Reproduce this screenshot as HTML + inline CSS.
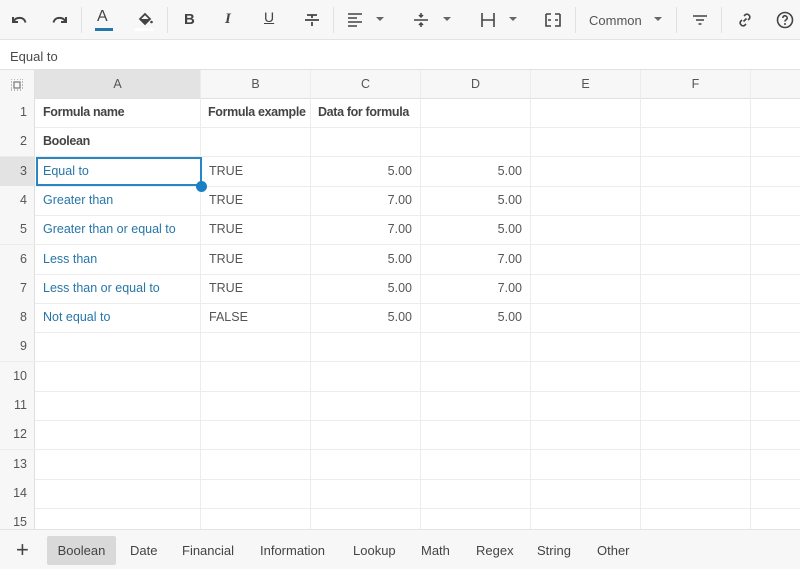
<!DOCTYPE html>
<html><head><meta charset="utf-8"><style>
*{box-sizing:border-box;margin:0;padding:0}
body{width:800px;height:569px;overflow:hidden;font-family:"Liberation Sans",Arial,sans-serif;background:#fff;position:relative;color:#555}
.tb{position:absolute;left:0;top:0;width:800px;height:40px;background:#f7f7f7;border-bottom:1px solid #e3e3e3}
.ic{position:absolute;top:10px}
.sep{position:absolute;top:7px;width:1px;height:26px;background:#e0e0e0}
.fb{position:absolute;top:40px;left:0;width:800px;height:30px;border-bottom:1px solid #e0e0e0;font-size:13px;padding:9px 10px;color:#4a4a4a}
.row{position:absolute;left:0;width:800px;height:30px;border-bottom:1px solid #ececec;font-size:12.5px}
.c{position:absolute;top:0;height:100%;border-right:1px solid #ececec;line-height:29px;padding:0 8px;white-space:nowrap;overflow:hidden}
.rh{left:0;width:35px;background:#f7f7f7;text-align:right;padding-right:7px;color:#555;border-right:1px solid #e0e0e0}
.a{left:35px;width:166px}.b{left:201px;width:110px}.cc{left:311px;width:110px}.d{left:421px;width:110px}.e{left:531px;width:110px}.f{left:641px;width:110px}.g{left:751px;width:60px}
.r{text-align:right}.bo{font-weight:bold;color:#444;letter-spacing:-0.35px}.bl{color:#2776a8}
.hd{background:#f7f7f7;text-align:center;color:#555;border-bottom:1px solid #e0e0e0}
.tabs{position:absolute;left:0;top:529px;width:800px;height:40px;background:#f7f7f7;border-top:1px solid #e3e3e3;font-size:13px}
.tab{position:absolute;top:6px;height:29px;line-height:29px;color:#444}
</style></head><body>
<div class="tb">
<svg class="ic" style="left:9px" width="20" height="20" viewBox="0 0 20 20"><path d="M4 7v5h5M4.5 11.5C6 8.5 9 7.5 12 8s4 2.5 4.5 4.5" fill="none" stroke="#444" stroke-width="2"/></svg>
<svg class="ic" style="left:50px" width="20" height="20" viewBox="0 0 20 20"><path d="M16 7v5h-5M15.5 11.5C14 8.5 11 7.5 8 8s-4 2.5-4.5 4.5" fill="none" stroke="#444" stroke-width="2"/></svg>
<div class="sep" style="left:81px"></div>
<div style="position:absolute;left:97px;top:8px;font-size:16px;color:#444">A</div>
<div style="position:absolute;left:95px;top:28px;width:18px;height:3px;background:#2776a8"></div>
<svg class="ic" style="left:135px" width="20" height="20" viewBox="0 0 20 20"><path d="M5 9l5-5 5 5-5 5z" fill="none" stroke="#444" stroke-width="1.8"/><path d="M5 9h10l-5 5z" fill="#444"/><circle cx="16.5" cy="12" r="1.3" fill="#444"/></svg>
<div style="position:absolute;left:135px;top:28px;width:18px;height:3px;background:#fff"></div>
<div class="sep" style="left:167px"></div>
<div style="position:absolute;left:184px;top:11px;font-size:15px;font-weight:bold;color:#444">B</div>
<div style="position:absolute;left:225px;top:11px;font-size:15px;font-style:italic;font-weight:bold;color:#444;font-family:'Liberation Serif',serif">I</div>
<div style="position:absolute;left:264px;top:9px;font-size:14px;color:#444;text-decoration:underline">U</div>
<svg class="ic" style="left:302px" width="20" height="20" viewBox="0 0 20 20"><path d="M5 5h10M10 5v3M3 10h14M10 12v4" stroke="#444" stroke-width="1.8"/></svg>
<div class="sep" style="left:333px"></div>
<svg class="ic" style="left:345px" width="20" height="20" viewBox="0 0 20 20"><path d="M3 4h14M3 8h9M3 12h14M3 16h9" stroke="#444" stroke-width="1.6"/></svg>
<div style="position:absolute;left:376px;top:17px;border:4px solid transparent;border-top:4px solid #666"></div>
<svg class="ic" style="left:411px" width="20" height="20" viewBox="0 0 20 20"><path d="M3 10h14M10 3v4M8 5l2 2 2-2M10 17v-4M8 15l2-2 2 2" stroke="#444" stroke-width="1.5" fill="none"/></svg>
<div style="position:absolute;left:443px;top:17px;border:4px solid transparent;border-top:4px solid #666"></div>
<svg class="ic" style="left:478px" width="20" height="20" viewBox="0 0 20 20"><path d="M4 3v14M16 3v14M4 10h12" stroke="#444" stroke-width="1.6"/></svg>
<div style="position:absolute;left:509px;top:17px;border:4px solid transparent;border-top:4px solid #666"></div>
<svg class="ic" style="left:543px" width="20" height="20" viewBox="0 0 20 20"><path d="M3 4h5M3 4v12h5M17 4h-5M17 4v12h-5M5 10h3M15 10h-3" stroke="#444" stroke-width="1.6" fill="none"/></svg>
<div class="sep" style="left:575px"></div>
<div style="position:absolute;left:589px;top:13px;font-size:13px;color:#555">Common</div>
<div style="position:absolute;left:654px;top:17px;border:4px solid transparent;border-top:4px solid #666"></div>
<div class="sep" style="left:676px"></div>
<svg class="ic" style="left:690px" width="20" height="20" viewBox="0 0 20 20"><path d="M3 6h14M6 10h8M8.5 14h3" stroke="#444" stroke-width="1.6"/></svg>
<div class="sep" style="left:721px"></div>
<svg class="ic" style="left:735px" width="20" height="20" viewBox="0 0 20 20"><path d="M8.5 11.5l3-3M9 6l1.5-1.5a3 3 0 014 4L13 10M11 14l-1.5 1.5a3 3 0 01-4-4L7 10" stroke="#444" stroke-width="1.6" fill="none"/></svg>
<svg class="ic" style="left:775px" width="20" height="20" viewBox="0 0 20 20"><circle cx="10" cy="10" r="7.5" fill="none" stroke="#444" stroke-width="1.6"/><path d="M7.8 8a2.2 2.2 0 114 1.2c-.8.8-1.8 1.1-1.8 2.3" fill="none" stroke="#444" stroke-width="1.6"/><circle cx="10" cy="14" r="1" fill="#444"/></svg>
</div>
<div class="fb">Equal to</div>

<div class="row" style="top:70px;height:29px;border-bottom:none">
<div class="c rh hd" style="text-align:center;padding:0"><svg width="12" height="12" viewBox="0 0 12 12" style="margin-top:9px"><rect x="3" y="3" width="6" height="6" fill="none" stroke="#777" stroke-width="1.2"/><path d="M0 0h1M0 3h1M0 6h1M0 9h1M0 11h1M11 0h1M11 3h1M11 6h1M11 9h1M3 0h1M6 0h1M9 0h1M3 11h1M6 11h1M9 11h1" stroke="#777"/></svg></div>
<div class="c a hd" style="background:#e3e3e3">A</div><div class="c b hd">B</div><div class="c cc hd">C</div><div class="c d hd">D</div><div class="c e hd">E</div><div class="c f hd">F</div><div class="c g hd"></div>
</div>

<div class="row" style="top:98px"><div class="c rh">1</div><div class="c a bo">Formula name</div><div class="c b bo" style="padding-left:7px;padding-right:0">Formula example</div><div class="c cc bo" style="padding-left:7px;padding-right:0">Data for formula</div><div class="c d"></div><div class="c e"></div><div class="c f"></div></div>
<div class="row" style="top:127px"><div class="c rh">2</div><div class="c a bo">Boolean</div><div class="c b"></div><div class="c cc"></div><div class="c d"></div><div class="c e"></div><div class="c f"></div></div>
<div class="row" style="top:157px"><div class="c rh" style="background:#e3e3e3">3</div><div class="c a bl">Equal to</div><div class="c b">TRUE</div><div class="c cc r">5.00</div><div class="c d r">5.00</div><div class="c e"></div><div class="c f"></div></div>
<div class="row" style="top:186px"><div class="c rh">4</div><div class="c a bl">Greater than</div><div class="c b">TRUE</div><div class="c cc r">7.00</div><div class="c d r">5.00</div><div class="c e"></div><div class="c f"></div></div>
<div class="row" style="top:215px"><div class="c rh">5</div><div class="c a bl">Greater than or equal to</div><div class="c b">TRUE</div><div class="c cc r">7.00</div><div class="c d r">5.00</div><div class="c e"></div><div class="c f"></div></div>
<div class="row" style="top:245px"><div class="c rh">6</div><div class="c a bl">Less than</div><div class="c b">TRUE</div><div class="c cc r">5.00</div><div class="c d r">7.00</div><div class="c e"></div><div class="c f"></div></div>
<div class="row" style="top:274px"><div class="c rh">7</div><div class="c a bl">Less than or equal to</div><div class="c b">TRUE</div><div class="c cc r">5.00</div><div class="c d r">7.00</div><div class="c e"></div><div class="c f"></div></div>
<div class="row" style="top:303px"><div class="c rh">8</div><div class="c a bl">Not equal to</div><div class="c b">FALSE</div><div class="c cc r">5.00</div><div class="c d r">5.00</div><div class="c e"></div><div class="c f"></div></div>
<div class="row" style="top:332px"><div class="c rh">9</div><div class="c a"></div><div class="c b"></div><div class="c cc"></div><div class="c d"></div><div class="c e"></div><div class="c f"></div></div>
<div class="row" style="top:362px"><div class="c rh">10</div><div class="c a"></div><div class="c b"></div><div class="c cc"></div><div class="c d"></div><div class="c e"></div><div class="c f"></div></div>
<div class="row" style="top:391px"><div class="c rh">11</div><div class="c a"></div><div class="c b"></div><div class="c cc"></div><div class="c d"></div><div class="c e"></div><div class="c f"></div></div>
<div class="row" style="top:420px"><div class="c rh">12</div><div class="c a"></div><div class="c b"></div><div class="c cc"></div><div class="c d"></div><div class="c e"></div><div class="c f"></div></div>
<div class="row" style="top:450px"><div class="c rh">13</div><div class="c a"></div><div class="c b"></div><div class="c cc"></div><div class="c d"></div><div class="c e"></div><div class="c f"></div></div>
<div class="row" style="top:479px"><div class="c rh">14</div><div class="c a"></div><div class="c b"></div><div class="c cc"></div><div class="c d"></div><div class="c e"></div><div class="c f"></div></div>
<div class="row" style="top:508px"><div class="c rh">15</div><div class="c a"></div><div class="c b"></div><div class="c cc"></div><div class="c d"></div><div class="c e"></div><div class="c f"></div></div>

<div style="position:absolute;left:36px;top:157px;width:166px;height:29px;border:2px solid #2a86c2"></div>
<div style="position:absolute;left:196px;top:181px;width:11px;height:11px;border-radius:50%;background:#1a7fc4"></div>

<div class="tabs">
<div class="tab" style="left:16px;font-size:22px;line-height:27px;color:#444">+</div>
<div class="tab" style="left:47px;width:69px;background:#d9d9d9;border-radius:2px;text-align:center">Boolean</div>
<div class="tab" style="left:130px">Date</div>
<div class="tab" style="left:182px">Financial</div>
<div class="tab" style="left:260px">Information</div>
<div class="tab" style="left:353px">Lookup</div>
<div class="tab" style="left:421px">Math</div>
<div class="tab" style="left:476px">Regex</div>
<div class="tab" style="left:537px">String</div>
<div class="tab" style="left:597px">Other</div>
</div>
</body></html>
